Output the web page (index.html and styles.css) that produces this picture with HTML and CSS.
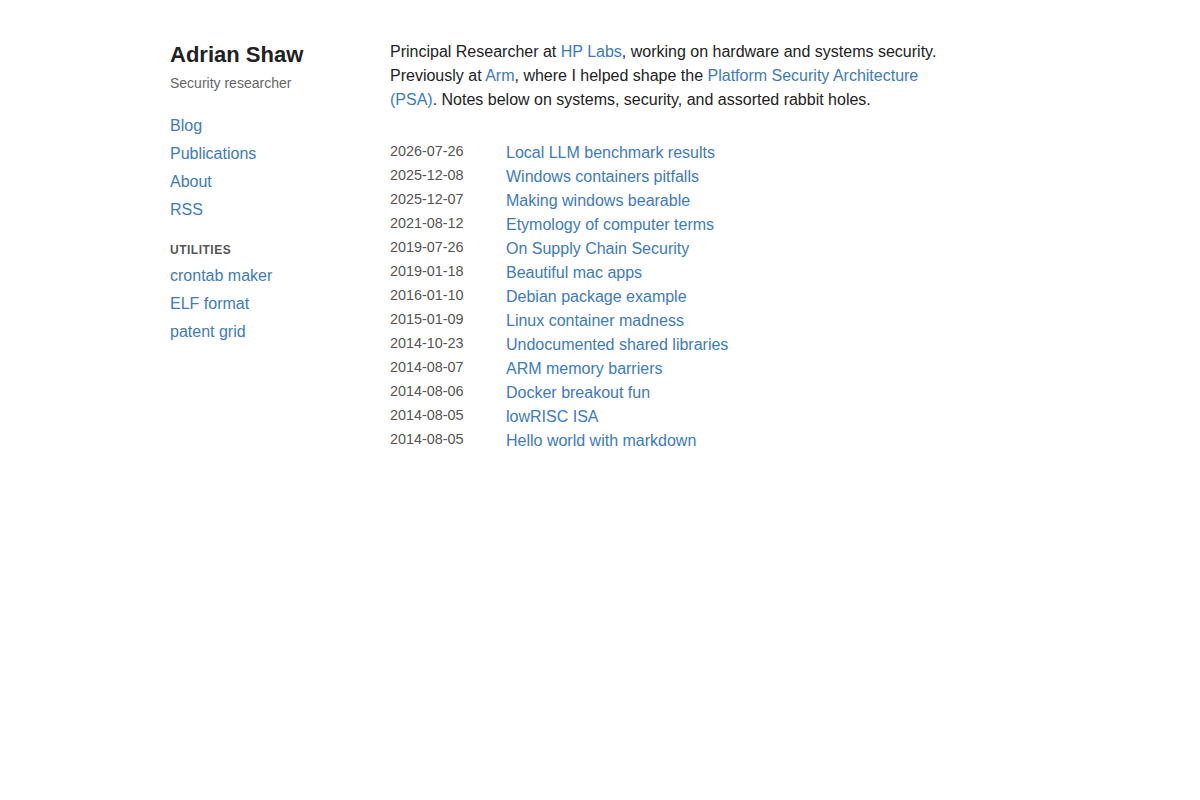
FILE: index.html
```html
<!DOCTYPE html>
<html lang="en">
<head>
  <meta charset="UTF-8">
  <title>Adrian Shaw</title>
  <link rel="stylesheet" href="styles.css">
</head>
<body>
  <div class="page">
    <aside class="sidebar">
      <h1 class="name">Adrian Shaw</h1>
      <div class="tagline">Security researcher</div>
      <nav class="nav">
        <a href="#">Blog</a>
        <a href="#">Publications</a>
        <a href="#">About</a>
        <a href="#">RSS</a>
      </nav>
      <div class="nav-heading">Utilities</div>
      <nav class="nav">
        <a href="#">crontab maker</a>
        <a href="#">ELF format</a>
        <a href="#">patent grid</a>
      </nav>
    </aside>
    <main class="main">
      <p class="intro">
        Principal Researcher at <a href="#">HP Labs</a>, working on hardware and systems security.
        Previously at <a href="#">Arm</a>, where I helped shape the <a href="#">Platform Security Architecture (PSA)</a>.
        Notes below on systems, security, and assorted rabbit holes.
      </p>
      <ul class="posts">
        <li><span class="date">2026-07-26</span><a href="#">Local LLM benchmark results</a></li>
        <li><span class="date">2025-12-08</span><a href="#">Windows containers pitfalls</a></li>
        <li><span class="date">2025-12-07</span><a href="#">Making windows bearable</a></li>
        <li><span class="date">2021-08-12</span><a href="#">Etymology of computer terms</a></li>
        <li><span class="date">2019-07-26</span><a href="#">On Supply Chain Security</a></li>
        <li><span class="date">2019-01-18</span><a href="#">Beautiful mac apps</a></li>
        <li><span class="date">2016-01-10</span><a href="#">Debian package example</a></li>
        <li><span class="date">2015-01-09</span><a href="#">Linux container madness</a></li>
        <li><span class="date">2014-10-23</span><a href="#">Undocumented shared libraries</a></li>
        <li><span class="date">2014-08-07</span><a href="#">ARM memory barriers</a></li>
        <li><span class="date">2014-08-06</span><a href="#">Docker breakout fun</a></li>
        <li><span class="date">2014-08-05</span><a href="#">lowRISC ISA</a></li>
        <li><span class="date">2014-08-05</span><a href="#">Hello world with markdown</a></li>
      </ul>
    </main>
  </div>
</body>
</html>
```

FILE: styles.css
```css
body {
  font-family: 'Liberation Sans', Arial, sans-serif;
  font-size: 16px;
  line-height: 24px;
  background: #fff;
  color: #222;
  margin: 0;
  padding: 0;
}
a {
  color: #3b7bbf;
  text-decoration: none;
}
a:hover {
  text-decoration: underline;
}
.page {
  width: 860px;
  margin: 0 auto;
  padding-top: 40px;
  display: flex;
}
.sidebar {
  width: 220px;
  flex-shrink: 0;
}
.name {
  font-size: 22px;
  line-height: 28px;
  font-weight: bold;
  margin: 0;
  padding-top: 1px;
  color: #222;
}
.tagline {
  font-size: 14px;
  color: #666;
  margin-top: 2px;
}
.nav {
  display: flex;
  flex-direction: column;
  margin-top: 17px;
}
.nav a {
  line-height: 28px;
}
.nav-heading {
  margin: 16px 0 2px 0;
  font-size: 12px;
  line-height: 20px;
  font-weight: bold;
  text-transform: uppercase;
  letter-spacing: 0.5px;
  color: #555;
}
.nav-heading + .nav {
  margin-top: 0;
}
.main {
  width: 560px;
}
.intro {
  margin: 0 0 29px 0;
}
.posts {
  list-style: none;
  margin: 0;
  padding: 0;
}
.posts li {
  display: flex;
  align-items: flex-start;
  line-height: 24px;
}
.posts .date {
  width: 116px;
  flex-shrink: 0;
  font-size: 14.4px;
  line-height: 20px;
  color: #555;
}
```
